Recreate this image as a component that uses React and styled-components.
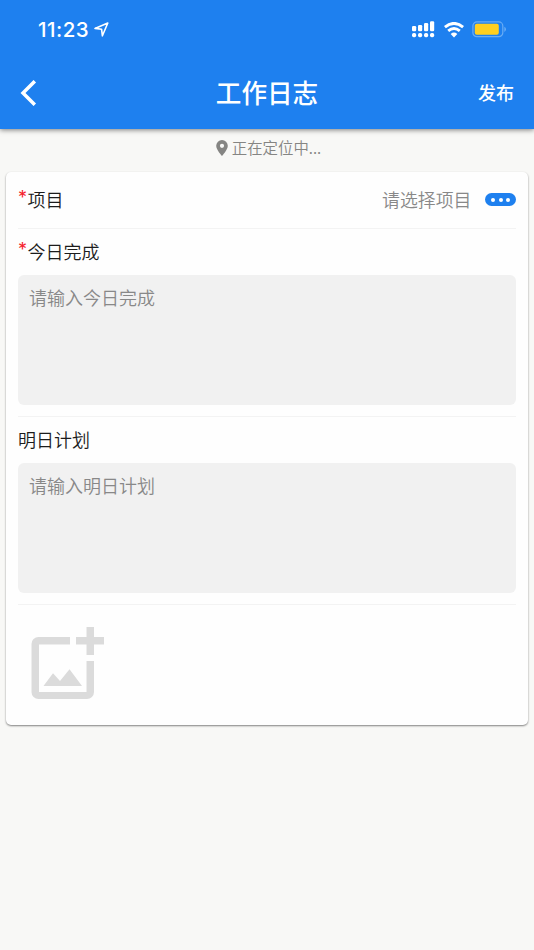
import React from "react";
import styled, { createGlobalStyle } from "styled-components";

const GlobalStyle = createGlobalStyle`
  * { box-sizing: border-box; }
  body {
    margin: 0;
    background: #f8f8f6;
    font-family: "Noto Sans CJK SC", sans-serif;
    font-weight: 350;
  }
`;

const Page = styled.main`
  height: 950px;
  display: flex;
  flex-direction: column;
  background: #f8f8f6;
`;

const Header = styled.header`
  height: 129px;
  flex: none;
  background: #1e80ef;
  color: #fff;
  box-shadow: 0 1px 5px rgba(0, 0, 0, 0.5);
`;

const StatusBar = styled.div`
  height: 58px;
  padding: 1px 27px 0 38px;
  display: flex;
  align-items: center;
  justify-content: space-between;
`;

const StatusGroup = styled.div`
  display: flex;
  align-items: center;
  gap: ${(p) => p.$gap}px;
`;

const Clock = styled.span`
  font: 500 20.5px/24px Inter, sans-serif;
  letter-spacing: 0.5px;
`;

const NavBar = styled.div`
  height: 70px;
  padding: 0 20px;
  display: grid;
  grid-template-columns: 60px 1fr 60px;
  align-items: center;
`;

const BackButton = styled.button`
  display: flex;
  padding: 0;
  border: 0;
  background: none;
  color: inherit;
`;

const Title = styled.h1`
  margin: 0 0 2px;
  text-align: center;
  font-size: 25.6px;
  line-height: 36px;
  font-weight: 500;
`;

const Publish = styled.button`
  margin: 0 0 2px;
  padding: 0;
  border: 0;
  background: none;
  color: inherit;
  text-align: right;
  white-space: nowrap;
  font: 500 18px/26px "Noto Sans CJK SC", sans-serif;
`;

const Location = styled.div`
  height: 43px;
  flex: none;
  padding: 0 0 5px 3px;
  display: flex;
  align-items: center;
  justify-content: center;
  gap: 4px;
  color: #858583;
  font-size: 15.4px;
  line-height: 22px;
`;

const LocationText = styled.span`
  margin-bottom: 2px;
`;

const Card = styled.section`
  height: 553px;
  margin: 0 6px;
  padding: 0 12px;
  border-radius: 5px;
  background: #fefefe;
  box-shadow: 0 1px 2px rgba(0, 0, 0, 0.48);
`;

const ProjectRow = styled.div`
  height: 56px;
  padding-bottom: 2px;
  display: flex;
  align-items: center;
  justify-content: space-between;
`;

const Label = styled.label`
  display: flex;
  align-items: flex-start;
  color: #1c1c1c;
  font-size: 18px;
  line-height: 26px;
`;

const Required = styled.span`
  width: 9.5px;
  height: 26px;
  flex: none;
  color: #f5222d;
  font: 400 18px/24px Inter, sans-serif;
`;

const Picker = styled.div`
  display: flex;
  align-items: center;
  gap: 13.5px;
  color: #888;
  font-size: 17.9px;
  line-height: 26px;
`;

const MoreButton = styled.button`
  width: 31px;
  height: 13px;
  margin-top: 1px;
  padding: 0;
  border: 0;
  border-radius: 7px;
  display: flex;
  align-items: center;
  justify-content: center;
  gap: 3.7px;
  background: #1e80ef;
`;

const Dot = styled.span`
  width: 4px;
  height: 4px;
  border-radius: 50%;
  background: #fff;
`;

const Field = styled.div`
  height: 188px;
  border-top: 1px solid #f3f3f3;
  padding-top: 9px;
`;

const TextArea = styled.textarea`
  display: block;
  width: 100%;
  height: 130px;
  margin-top: 11px;
  padding: 9px 11px;
  border: 0;
  border-radius: 6px;
  outline: 0;
  resize: none;
  background: #f1f1f1;
  font: 350 18px/26px "Noto Sans CJK SC", sans-serif;

  &::placeholder {
    color: #888;
    opacity: 1;
  }
`;

const Upload = styled.div`
  border-top: 1px solid #f3f3f3;
  padding: 22px 13px 0;
`;

const Svg = styled.svg`
  display: block;
  flex: none;
`;

const Signal = () => (
  <Svg width="23" height="17" viewBox="0 0 23 17" fill="#fff">
    {[5, 4, 2, 0.3].map((y, i) => (
      <g key={i}>
        <rect x={i * 6} y={y} width="4.2" height={10.3 - y} rx="1.2" />
        <rect x={i * 6} y="12" width="4.2" height="4.2" rx="1.7" />
      </g>
    ))}
  </Svg>
);

const Wifi = () => (
  <Svg width="20" height="16" viewBox="0 0 20 16">
    <g fill="none" stroke="#fff" strokeWidth="2.9">
      <path d="M.9 5.2Q10-2.4 19.1 5.2" />
      <path d="M4.2 8.9Q10 4.2 15.8 8.9" />
    </g>
    <path d="M6.7 11.9Q10 9 13.3 11.9L10 15.4z" fill="#fff" />
  </Svg>
);

const Battery = () => (
  <Svg width="35" height="17" viewBox="0 0 35 17">
    <rect x=".9" y=".9" width="29.9" height="14.8" rx="4" fill="none" stroke="#69acf5" strokeWidth="1.2" />
    <rect x="2.8" y="2.8" width="24" height="11" rx="2" fill="#ffcf20" />
    <path d="M32.3 5.7Q34 6.5 34 8.3T32.3 11z" fill="#69acf5" />
  </Svg>
);

function ReportField({ label, required, placeholder }) {
  return (
    <Field>
      <Label>
        {required && <Required>*</Required>}
        {label}
      </Label>
      <TextArea placeholder={placeholder} />
    </Field>
  );
}

export default function App() {
  return (
    <Page>
      <GlobalStyle />
      <Header>
        <StatusBar>
          <StatusGroup $gap={5}>
            <Clock>11:23</Clock>
            <Svg width="15" height="15" viewBox="0 0 15 15" fill="none" stroke="#fff" strokeWidth="1.6" strokeLinejoin="round">
              <path d="M1 6.4 13.8 1 8.4 13.8 7.6 7.3z" />
            </Svg>
          </StatusGroup>
          <StatusGroup $gap={8.5}>
            <Signal />
            <Wifi />
            <Battery />
          </StatusGroup>
        </StatusBar>
        <NavBar>
          <BackButton aria-label="返回">
            <Svg width="17" height="26" viewBox="0 0 17 26" fill="none" stroke="#fff" strokeWidth="3.5">
              <path d="M14.8 1.2 3 13 14.8 24.8" />
            </Svg>
          </BackButton>
          <Title>工作日志</Title>
          <Publish>发布</Publish>
        </NavBar>
      </Header>
      <Location>
        <Svg width="12" height="16" viewBox="0 0 12 16" fill="#858583">
          <path fillRule="evenodd" d="M6 0a5.8 5.8 0 0 0-5.8 5.8C.2 10 6 16 6 16s5.8-6 5.8-10.2A5.8 5.8 0 0 0 6 0m0 3.7a2.1 2.1 0 1 1 0 4.2 2.1 2.1 0 0 1 0-4.2" />
        </Svg>
        <LocationText>正在定位中...</LocationText>
      </Location>
      <Card>
        <ProjectRow>
          <Label>
            <Required>*</Required>项目
          </Label>
          <Picker>
            <span>请选择项目</span>
            <MoreButton aria-label="选择项目">
              <Dot />
              <Dot />
              <Dot />
            </MoreButton>
          </Picker>
        </ProjectRow>
        <ReportField label="今日完成" required placeholder="请输入今日完成" />
        <ReportField label="明日计划" placeholder="请输入明日计划" />
        <Upload>
          <Svg width="74" height="73" viewBox="0 0 74 73" fill="#dbdbdb">
            <path d="M39 10H7.5A7 7 0 0 0 .5 17v48a7 7 0 0 0 7 7H56a7 7 0 0 0 7-7V34h-7.5v31H8V17.5h31z" />
            <path d="M55.5 0H63v10h10v7.5H63V28h-7.5V17.500H45V10h10.500z" />
            <path d="M12.500 59 22 46.300l7 7.700 9.500-11.700L51 59z" />
          </Svg>
        </Upload>
      </Card>
    </Page>
  );
}
